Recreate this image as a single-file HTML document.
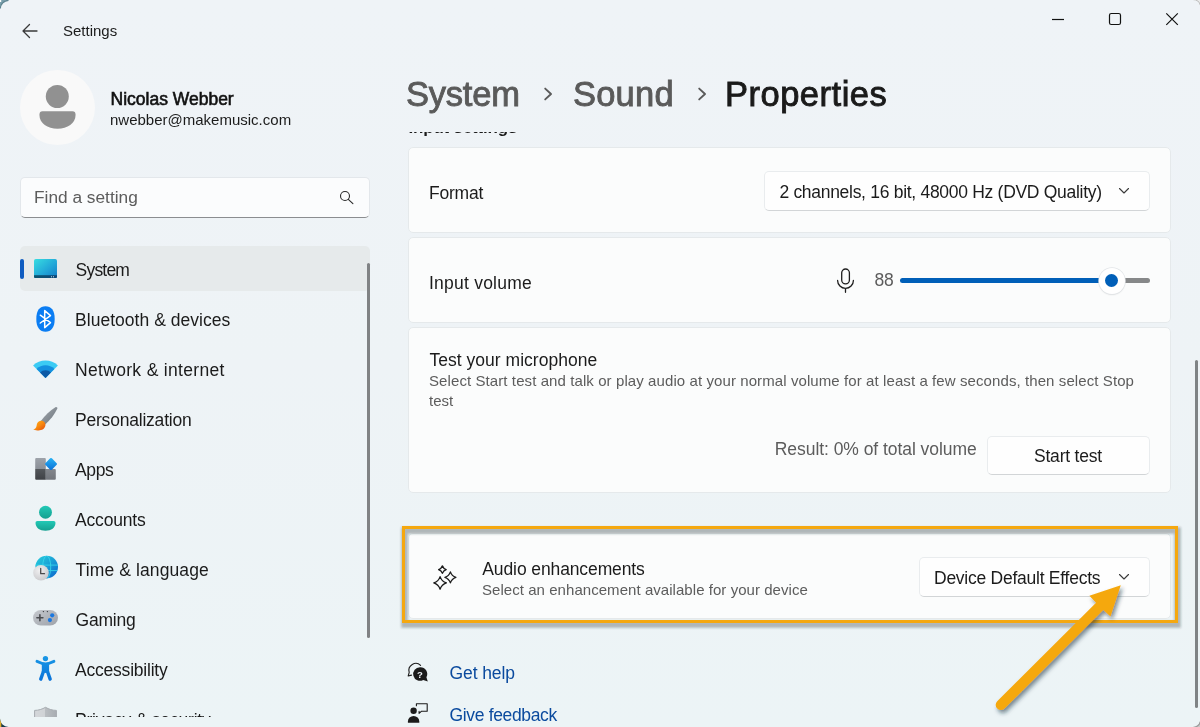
<!DOCTYPE html>
<html><head><meta charset="utf-8"><title>Settings</title>
<style>
*{box-sizing:border-box;margin:0;padding:0}
html,body{width:1200px;height:727px;overflow:hidden;background:#eef3f6;font-family:"Liberation Sans",sans-serif;color:#1b1b1b}
body{position:relative;background:linear-gradient(180deg,#eff3f7 0%,#eef3f6 50%,#ecf4f6 100%)}
.t{position:absolute;white-space:nowrap;line-height:1}
.abs{position:absolute}
.card{position:absolute;left:408px;width:763px;background:#fbfcfc;border:1px solid #e5e9eb;border-radius:5px}
.dd{position:absolute;background:#fefefe;border:1px solid #e9ecee;border-bottom-color:#d2d5d7;border-radius:5px}
.nav{position:absolute;left:75px;font-size:17px;white-space:nowrap;line-height:1;color:#1b1b1b}
.sub{color:#5c5c5c;font-size:15px}
#root{position:absolute;left:0;top:0;width:1200px;height:727px;will-change:transform}
</style></head><body><div id="root">
<!-- window corners -->
<svg class="abs" style="left:0;top:0" width="12" height="12" viewBox="0 0 12 12"><path d="M0 0h9A9 9 0 0 0 0 9z" fill="#7a9fac"/><path d="M8.500 .3A8.500 8.500 0 0 0 .3 8.500" fill="none" stroke="#5f8592" stroke-width="1.200"/><rect width="1.200" height="2" fill="#fff"/></svg>
<svg class="abs" style="left:1188px;top:0" width="12" height="12" viewBox="0 0 12 12"><path d="M12 0H4.500A7.500 7.500 0 0 1 12 5.500z" fill="#ebebeb"/><path d="M4.500 -.5A8 8 0 0 1 12.500 5.500" fill="none" stroke="#b9b9b9" stroke-width="1"/></svg>
<svg class="abs" style="left:0;top:715px" width="12" height="12" viewBox="0 0 12 12"><path d="M0 12h8.500A8.500 8.500 0 0 1 0 3.500z" fill="#153a4e"/><path d="M0 12V4a8 8 0 0 0 1.300 4V12z" fill="#e0ab2a"/></svg>
<svg class="abs" style="left:1188px;top:715px" width="12" height="12" viewBox="0 0 12 12"><path d="M12 12H4.500A7.500 7.500 0 0 0 12 6.500z" fill="#c9c9c9"/><path d="M4 12.500A8 8 0 0 0 12.500 6.500" fill="none" stroke="#9c9c9c" stroke-width="1.200"/></svg>
<!-- title bar -->
<svg class="abs" style="left:20px;top:22px" width="20" height="18" viewBox="0 0 20 18"><path d="M17 9H3M9.500 2.500L3 9l6.500 6.500" fill="none" stroke="#3a3a3a" stroke-width="1.300" stroke-linecap="round" stroke-linejoin="round"/></svg>
<div class="t" id="t_settings" style="left:63px;top:23px;font-size:15px">Settings</div>
<svg class="abs" style="left:1040px;top:8px" width="150" height="24" viewBox="0 0 150 24"><path d="M12 11.500h12" stroke="#111" stroke-width="1.200" fill="none"/><rect x="69.500" y="5.500" width="11" height="11" rx="1.800" fill="none" stroke="#111" stroke-width="1.200"/><path d="M126.300 5.300l11.500 11.500M137.800 5.300l-11.500 11.500" stroke="#111" stroke-width="1.200" fill="none"/></svg>
<!-- avatar -->
<div class="abs" style="left:20px;top:70px;width:75px;height:75px;border-radius:50%;background:#f9f9f9"></div>
<svg class="abs" style="left:20px;top:70px" width="75" height="75" viewBox="0 0 75 75"><circle cx="37.300" cy="26.500" r="11.500" fill="#919191"/><path d="M22.500 41.300h30a3 3 0 0 1 3 3v1c0 8-8 13.500-18 13.500s-18-5.500-18-13.500v-1a3 3 0 0 1 3-3z" fill="#919191"/></svg>
<div class="t" id="t_name" style="left:110.500px;top:91px;font-size:17.500px;color:#111;letter-spacing:0px;-webkit-text-stroke:0.600px #111">Nicolas Webber</div>
<div class="t" id="t_email" style="left:110px;top:112px;font-size:15px;color:#1b1b1b">nwebber@makemusic.com</div>
<!-- search -->
<div class="abs" style="left:20px;top:177px;width:350px;height:41px;background:#fbfcfd;border:1px solid #e3e7eb;border-bottom:1.500px solid #8b8d90;border-radius:5px"></div>
<div class="t" id="t_find" style="left:34px;top:189px;font-size:17.300px;color:#5c5c5c;letter-spacing:0px">Find a setting</div>
<svg class="abs" style="left:336px;top:187px" width="20" height="20" viewBox="0 0 20 20"><circle cx="9" cy="9" r="4.500" fill="none" stroke="#2a2a2a" stroke-width="1.100"/><path d="M12.300 12.300l4.600 4.400" stroke="#2a2a2a" stroke-width="1.100" stroke-linecap="round"/></svg>
<!-- NAV -->
<div class="abs" style="left:20px;top:246px;width:350px;height:44.500px;background:#e6eaeb;border-radius:5px"></div>
<div class="abs" style="left:20px;top:259px;width:4px;height:19.500px;background:#0f5cc0;border-radius:2px"></div>
<div class="abs" style="left:367px;top:263px;width:3px;height:375px;background:#808284;border-radius:1.500px"></div>
<!--ICONS-->
<!-- system -->
<svg class="abs" style="left:34px;top:258.800px" width="23" height="19.200" viewBox="0 0 23 19.200"><defs><linearGradient id="g1" x1="0" y1="0" x2="1" y2="1"><stop offset="0" stop-color="#38dde1"/><stop offset=".55" stop-color="#22a8d8"/><stop offset="1" stop-color="#127bc6"/></linearGradient><linearGradient id="g1b" x1="0" x2="1"><stop offset="0" stop-color="#0b5572"/><stop offset="1" stop-color="#0d4778"/></linearGradient><clipPath id="c1p"><rect width="23" height="19.200" rx="1.800"/></clipPath></defs><g clip-path="url(#c1p)"><rect width="23" height="19.200" fill="url(#g1)"/><rect y="16.200" width="23" height="3" fill="url(#g1b)"/><rect x="17" y="17.300" width="1" height="1" fill="#c5deea"/><rect x="19" y="17.300" width="1" height="1" fill="#c5deea"/></g></svg>
<!-- bluetooth -->
<svg class="abs" style="left:36px;top:305.500px" width="19" height="26" viewBox="0 0 19 26"><path d="M9.500 .3c5.600 0 9.200 4 9.200 12.700S15.100 25.700 9.500 25.700 .3 21.700 .3 13 3.900 .3 9.500 .3z" fill="#0b7df3"/><path d="M4.300 9.200l10.200 7.400-5.800 5V4.600l5.800 5L4.300 17" fill="none" stroke="#fff" stroke-width="1.500" stroke-linejoin="round" stroke-linecap="round"/></svg>
<!-- wifi -->
<svg class="abs" style="left:32px;top:359px" width="27" height="20" viewBox="0 0 27 20"><path d="M13.500 18.900L1.100 6.600A17.600 17.600 0 0 1 25.900 6.600z" fill="#3ccbf4"/><path d="M13.500 18.900L4.600 10A12.600 12.600 0 0 1 22.400 10z" fill="#1590df"/><path d="M13.500 18.900L8.100 13.500A7.600 7.600 0 0 1 18.900 13.500z" fill="#0c5aa6"/></svg>
<!-- brush -->
<svg class="abs" style="left:32px;top:405px" width="28" height="28" viewBox="0 0 28 28"><defs><linearGradient id="g4a" x1="0" y1="0" x2="1" y2="1"><stop offset="0" stop-color="#a3a9af"/><stop offset="1" stop-color="#6b737b"/></linearGradient><linearGradient id="g4b" x1="0" y1="0" x2="1" y2="1"><stop offset="0" stop-color="#ffb31a"/><stop offset=".5" stop-color="#f88a10"/><stop offset="1" stop-color="#e24a0c"/></linearGradient></defs><path d="M23.400 2.200c1-.6 2.400.2 1.900 1.500C22.500 9.500 18 15 13.200 19.600L8.800 16C13 10.500 18 5.500 23.400 2.200z" fill="url(#g4a)"/><path d="M8.800 15.800c2.500-.3 5 1.800 4.600 4.800-.5 3.600-4.500 5.400-8.200 4.800-1.600-.2-3-.6-4-.9 2-.6 3.200-1.800 3.400-3.800.2-2.600 1.800-4.600 4.200-4.900z" fill="url(#g4b)"/></svg>
<!-- apps -->
<svg class="abs" style="left:34px;top:456px" width="26" height="25" viewBox="0 0 26 25"><defs><linearGradient id="g5a" x1="0" y1="0" x2="0" y2="1"><stop offset="0" stop-color="#9ea3aa"/><stop offset="1" stop-color="#8a8f96"/></linearGradient><linearGradient id="g5b" x1="0" y1="0" x2="0" y2="1"><stop offset="0" stop-color="#53575b"/><stop offset="1" stop-color="#3f4246"/></linearGradient><linearGradient id="g5c" x1="0" y1="0" x2="0" y2="1"><stop offset="0" stop-color="#83878d"/><stop offset="1" stop-color="#72767c"/></linearGradient><linearGradient id="g5d" x1="0" y1="0" x2="1" y2="1"><stop offset="0" stop-color="#28b4f5"/><stop offset="1" stop-color="#0a6fd6"/></linearGradient></defs><path d="M2.200 2.100h8.600a1 1 0 0 1 1 1V13H1.200V3.100a1 1 0 0 1 1-1z" fill="url(#g5a)"/><path d="M1.200 13h10.600v10.700H2.200a1 1 0 0 1-1-1z" fill="url(#g5b)"/><path d="M11.800 13h9a1 1 0 0 1 1 1v8.700a1 1 0 0 1-1 1h-9z" fill="url(#g5c)"/><rect x="12.400" y="3.400" width="9.200" height="9.200" rx="1.200" transform="rotate(45 17 8)" fill="url(#g5d)"/></svg>
<!-- accounts -->
<svg class="abs" style="left:34px;top:505px" width="24" height="28" viewBox="0 0 24 28"><defs><linearGradient id="g6" x1="0" y1="0" x2="0" y2="1"><stop offset="0" stop-color="#22c9b6"/><stop offset="1" stop-color="#15a090"/></linearGradient></defs><circle cx="11.500" cy="7.200" r="6.450" fill="url(#g6)"/><path d="M3.300 16h16.400a1.800 1.800 0 0 1 1.800 1.800c0 5-4.300 8-10 8s-10-3-10-8A1.800 1.800 0 0 1 3.300 16z" fill="url(#g6)"/></svg>
<!-- time -->
<svg class="abs" style="left:32px;top:555px" width="28" height="28" viewBox="0 0 28 28"><defs><linearGradient id="g7" x1="0" y1="0" x2="1" y2="1"><stop offset="0" stop-color="#27cfdc"/><stop offset=".5" stop-color="#1a9fd6"/><stop offset="1" stop-color="#0b62cc"/></linearGradient><radialGradient id="g7b" cx=".4" cy=".35" r=".7"><stop offset="0" stop-color="#f0f0f1"/><stop offset="1" stop-color="#c9c9cc"/></radialGradient><clipPath id="c7"><circle cx="14.700" cy="12.100" r="11.300"/></clipPath></defs><circle cx="14.700" cy="12.100" r="11.300" fill="url(#g7)"/><g clip-path="url(#c7)" fill="none" stroke="#3ad8ea" stroke-width="1" opacity=".85"><path d="M0 10.100h28M0 15.600h28"/><ellipse cx="14.700" cy="12.100" rx="4" ry="11.300"/></g><circle cx="9" cy="17.800" r="7.800" fill="url(#g7b)"/><path d="M8.700 13.400v5.300h3.800" fill="none" stroke="#4a4a4c" stroke-width="1.300" stroke-linecap="round" stroke-linejoin="round"/></svg>
<!-- gaming -->
<svg class="abs" style="left:32px;top:609px" width="27" height="18" viewBox="0 0 27 18"><defs><linearGradient id="g8" x1="0" y1="0" x2="1" y2="1"><stop offset="0" stop-color="#c6c9ce"/><stop offset="1" stop-color="#9da2a9"/></linearGradient></defs><rect x="1" y=".900" width="25" height="15.700" rx="7.850" fill="url(#g8)"/><path d="M7.900 5.800v6M4.900 8.800h6" stroke="#4a4c50" stroke-width="1.600" stroke-linecap="round"/><circle cx="20.200" cy="6.300" r="2.100" fill="#1a78e0"/><circle cx="17.900" cy="11.100" r="2.100" fill="#1a78e0"/><circle cx="11.400" cy="2.600" r=".700" fill="#3a3c40"/><circle cx="15.400" cy="2.600" r=".700" fill="#3a3c40"/></svg>
<!-- accessibility -->
<svg class="abs" style="left:34px;top:654px" width="24" height="28" viewBox="0 0 24 28"><defs><linearGradient id="g9" gradientUnits="userSpaceOnUse" x1="0" y1="2" x2="0" y2="27"><stop offset="0" stop-color="#1a98e6"/><stop offset="1" stop-color="#0a72d8"/></linearGradient></defs><circle cx="11.450" cy="4.550" r="2.650" fill="url(#g9)"/><path d="M3 7.300L8.300 9.500Q11.450 10.500 14.600 9.500L19.900 7.300" fill="none" stroke="url(#g9)" stroke-width="2.900" stroke-linecap="round" stroke-linejoin="round"/><path d="M7.800 9.500h7.300v8.500l-3.650 1-3.650-1z" fill="url(#g9)"/><path d="M9.500 17.200L6.750 25.100M13.400 17.200L16.150 25.100" fill="none" stroke="url(#g9)" stroke-width="3.400" stroke-linecap="round"/></svg>
<!--/ICONS-->
<div class="nav" id="n1" style="top:261.89px;letter-spacing:-0.813px;font-size:17.5px;left:75.6px">System</div>
<div class="nav" id="n2" style="top:311.89px;letter-spacing:0.037px;font-size:17.5px;left:75px">Bluetooth &amp; devices</div>
<div class="nav" id="n3" style="top:361.89px;letter-spacing:0.324px;font-size:17.5px;left:75px">Network &amp; internet</div>
<div class="nav" id="n4" style="top:411.89px;font-size:17.5px;left:75px;letter-spacing:-0.209px">Personalization</div>
<div class="nav" id="n5" style="top:461.89px;left:75px;letter-spacing:-0.379px;font-size:17.5px">Apps</div>
<div class="nav" id="n6" style="top:511.89px;left:75px;font-size:17.5px;letter-spacing:-0.176px">Accounts</div>
<div class="nav" id="n7" style="top:561.89px;letter-spacing:0.106px;font-size:17.5px;left:75.6px">Time &amp; language</div>
<div class="nav" id="n8" style="top:611.89px;font-size:17.5px;left:75.6px;letter-spacing:-0.229px">Gaming</div>
<div class="nav" id="n9" style="top:661.89px;left:75px;letter-spacing:-0.213px;font-size:17.5px">Accessibility</div>
<div class="abs" style="left:30px;top:700px;width:300px;height:17px;overflow:hidden"><div class="nav" id="n10" style="left:45px;top:11.900px;font-size:17.500px;letter-spacing:-0.195px">Privacy &amp; security</div>
<svg class="abs" style="left:3px;top:6px" width="26" height="12" viewBox="0 0 26 12"><defs><linearGradient id="sh" x1="0" x2="1"><stop offset="0" stop-color="#d4d7da"/><stop offset=".5" stop-color="#cfd2d5"/><stop offset=".500" stop-color="#b9bdc1"/><stop offset="1" stop-color="#a8adb2"/></linearGradient></defs><path d="M1.600 4.400C5.500 4.400 9.200 3.200 12.500 1.300 15.800 3.200 19.500 4.400 23.400 4.400V12H1.600z" fill="url(#sh)" stroke="#a6abb0" stroke-width="1"/></svg></div>
<!-- breadcrumb -->
<div class="t" id="b1" style="left:406px;top:76.500px;font-size:34.500px;color:#5a5a5a;letter-spacing:-0.230px;-webkit-text-stroke:0.900px #5a5a5a">System</div>
<div class="t" id="b2" style="left:573px;top:76.500px;font-size:34.500px;color:#5a5a5a;letter-spacing:0.210px;-webkit-text-stroke:0.900px #5a5a5a">Sound</div>
<div class="t" id="b3" style="left:725px;top:76.500px;font-size:34.500px;color:#1a1a1a;letter-spacing:0.500px;-webkit-text-stroke:0.900px #1a1a1a">Properties</div>
<svg class="abs" style="left:540.500px;top:85px" width="14" height="18" viewBox="0 0 14 18"><path d="M4.200 3.600L10 9l-5.800 5.400" fill="none" stroke="#5a5a5a" stroke-width="1.900" stroke-linecap="round" stroke-linejoin="round"/></svg>
<svg class="abs" style="left:694.500px;top:85px" width="14" height="18" viewBox="0 0 14 18"><path d="M4.200 3.600L10 9l-5.800 5.400" fill="none" stroke="#5a5a5a" stroke-width="1.900" stroke-linecap="round" stroke-linejoin="round"/></svg>
<div class="abs" style="left:400px;top:131.700px;width:200px;height:10px;overflow:hidden"><div class="t" id="t_inp" style="left:8.500px;top:-13.100px;font-size:17px;font-weight:bold;letter-spacing:-0.200px">Input settings</div></div>
<!-- cards -->
<div class="card" style="top:147px;height:85.500px"></div>
<div class="t" id="c1" style="left:429px;top:185.19px;font-size:17.5px;letter-spacing:-0.232px">Format</div>
<div class="dd" style="left:764px;top:171px;width:386px;height:39.500px"></div>
<div class="t" id="c1v" style="left:779.4px;top:183.89px;font-size:17.5px;letter-spacing:-0.292px">2 channels, 16 bit, 48000 Hz (DVD Quality)</div>
<svg class="abs" style="left:1117px;top:184px" width="14" height="14" viewBox="0 0 14 14"><path d="M2.500 4.500L7 9l4.500-4.500" fill="none" stroke="#3a3a3a" stroke-width="1.100" stroke-linecap="round" stroke-linejoin="round"/></svg>
<div class="card" style="top:237px;height:85.500px"></div>
<div class="t" id="c2" style="left:429px;top:274.89px;font-size:17.5px;letter-spacing:0.230px">Input volume</div>
<svg class="abs" style="left:833px;top:264px" width="26" height="32" viewBox="0 0 26 32"><rect x="8.700" y="5" width="7.700" height="14.800" rx="3.850" fill="none" stroke="#1f1f1f" stroke-width="1.300"/><path d="M4.600 16.400a7.900 7.900 0 0 0 15.800 0M12.500 24.300v4" fill="none" stroke="#1f1f1f" stroke-width="1.300" stroke-linecap="round"/></svg>
<div class="t" id="c2v" style="left:874.6px;top:271.89px;font-size:17.5px;color:#5c5c5c;letter-spacing:-0.333px">88</div>
<div class="abs" style="left:900px;top:278px;width:206px;height:5px;border-radius:2.500px;background:#005fb8"></div>
<div class="abs" style="left:1120px;top:278px;width:30px;height:5px;border-radius:2.500px;background:#868889"></div>
<div class="abs" style="left:1098.500px;top:267.500px;width:26.500px;height:26.500px;border-radius:50%;background:#fff;box-shadow:0 0 0 0.700px #e2e5e8,0 1px 1.500px rgba(0,0,0,.12)"></div>
<div class="abs" style="left:1105px;top:274px;width:13px;height:13px;border-radius:50%;background:#005fb8"></div>
<div class="card" style="top:327px;height:166px"></div>
<div class="t" id="c3" style="left:429.5px;top:351.89px;font-size:17.5px;letter-spacing:0.017px">Test your microphone</div>
<div class="t sub" id="c3a" style="left:429px;top:373px;letter-spacing:0.090px">Select Start test and talk or play audio at your normal volume for at least a few seconds, then select Stop</div>
<div class="t sub" id="c3b" style="left:429px;top:393px">test</div>
<div class="t" id="c3r" style="left:774.75px;top:440.89px;font-size:17.5px;color:#5c5c5c;letter-spacing:-0.052px">Result: 0% of total volume</div>
<div class="dd" style="left:987px;top:435.500px;width:163px;height:39px"></div>
<div class="t" id="c3s" style="left:1034px;top:447.89px;font-size:17.5px;letter-spacing:-0.207px">Start test</div>
<!-- audio enhancements -->
<div class="card" style="top:533px;height:85.500px"></div>
<svg class="abs" style="left:430px;top:562px" width="30" height="30" viewBox="0 0 30 30"><g fill="none" stroke="#1b1b1b" stroke-width="1.300" stroke-linejoin="round"><path d="M12.40 3.80Q13.35 6.65 16.20 7.60Q13.35 8.55 12.40 11.40Q11.45 8.55 8.60 7.60Q11.45 6.65 12.40 3.80z"/><path d="M20.40 9.90Q21.77 14.02 25.90 15.40Q21.77 16.77 20.40 20.90Q19.02 16.77 14.90 15.40Q19.02 14.02 20.40 9.90z"/><path d="M10.10 14.60Q11.68 19.32 16.40 20.90Q11.68 22.47 10.10 27.20Q8.53 22.47 3.80 20.90Q8.53 19.32 10.10 14.60z"/></g></svg>
<div class="t" id="c4" style="left:482.3px;top:560.89px;font-size:17.5px;letter-spacing:-0.110px">Audio enhancements</div>
<div class="t sub" id="c4a" style="left:482px;top:582px;letter-spacing:0.050px">Select an enhancement available for your device</div>
<div class="dd" style="left:919px;top:557px;width:231px;height:39.500px"></div>
<div class="t" id="c4v" style="left:934px;top:569.89px;font-size:17.5px;letter-spacing:-0.254px">Device Default Effects</div>
<svg class="abs" style="left:1117px;top:570px" width="14" height="14" viewBox="0 0 14 14"><path d="M2.500 4.500L7 9l4.500-4.500" fill="none" stroke="#3a3a3a" stroke-width="1.100" stroke-linecap="round" stroke-linejoin="round"/></svg>
<!-- highlight box -->
<svg class="abs" style="left:390px;top:515px" width="800" height="125" viewBox="390 515 800 125"><defs><filter id="bsh" x="-5%" y="-20%" width="110%" height="150%"><feGaussianBlur stdDeviation="1.200"/></filter></defs><rect x="404.500" y="530.500" width="773" height="94" fill="none" stroke="#283237" stroke-opacity=".32" stroke-width="6.500" filter="url(#bsh)"/><rect x="403.500" y="527.500" width="773" height="94" fill="none" stroke="#f5a80f" stroke-width="3"/></svg>
<!-- links -->
<div class="t" id="l1" style="left:449.5px;top:664.89px;font-size:17.5px;color:#0a4a9e;letter-spacing:-0.089px">Get help</div>
<div class="t" id="l2" style="left:449.5px;top:707.19px;font-size:17.5px;color:#0a4a9e;letter-spacing:-0.343px">Give feedback</div>
<!--LINKICONS-->
<svg class="abs" style="left:406px;top:660px" width="26" height="26" viewBox="0 0 26 26"><path d="M14.600 5.400A6.900 6.900 0 0 0 3.200 12.300l-1 3.700 3.300-.9" fill="none" stroke="#1b1b1b" stroke-width="1.100" stroke-linejoin="round" stroke-linecap="round"/><path d="M14 7.200a6.800 6.800 0 1 0 3.200 12.800l4.600 1.500-1.400-4.300A6.800 6.800 0 0 0 14 7.200z" fill="#1b1b1b"/><text x="14" y="17.700" font-family="Liberation Sans,sans-serif" font-size="9.500" font-weight="bold" fill="#eff4f8" text-anchor="middle">?</text></svg>
<svg class="abs" style="left:406px;top:700px" width="26" height="26" viewBox="0 0 26 26"><circle cx="7.600" cy="10.800" r="3.200" fill="#1b1b1b"/><path d="M1.900 22.800v-1.300a5.700 5.600 0 0 1 11.400 0v1.300z" fill="#1b1b1b"/><path d="M10.400 5.800V3.800h10.800v7.400h-5.600l-2.500 2.100v-2.100" fill="none" stroke="#1b1b1b" stroke-width="1.100" stroke-linejoin="round" stroke-linecap="round"/></svg>
<!--/LINKICONS-->
<!-- arrow -->
<svg class="abs" style="left:980px;top:570px;overflow:visible" width="160" height="157" viewBox="980 570 160 157"><defs><filter id="ash" x="-20%" y="-20%" width="150%" height="150%"><feDropShadow dx="2" dy="3" stdDeviation="2" flood-color="#14303c" flood-opacity=".55"/></filter></defs><g filter="url(#ash)" fill="#f5a80f"><path d="M1120.800 585.200L1089.400 595.800L1096.100 602.700L997.200 701.200A5.200 5.200 0 0 0 1004.600 708.600L1103.300 609.900L1110.500 616.500Z"/></g></svg>
<!-- scrollbar -->
<div class="abs" style="left:1195px;top:360px;width:3px;height:348px;background:#7f8385;border-radius:1.500px"></div>
</div></body></html>
